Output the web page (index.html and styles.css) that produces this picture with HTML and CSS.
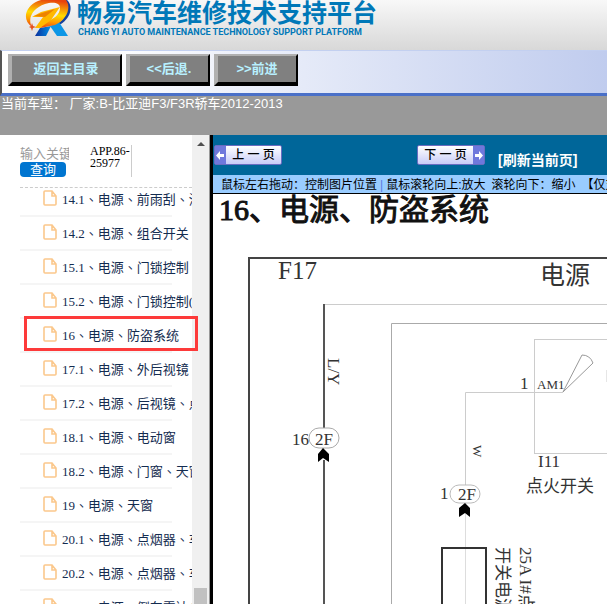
FILE: index.html
```html
<!DOCTYPE html>
<html lang="zh">
<head>
    <meta charset="UTF-8">
    <meta name="viewport" content="width=device-width, initial-scale=1.0">
    <title>畅易汽车维修技术支持平台</title>
    <link rel="stylesheet" href="styles.css">
</head>
<body>

<header class="header">
    <svg class="logo" width="48" height="40" viewBox="0 0 48 40">
        <defs>
            <linearGradient id="fire" x1="0.6" y1="0" x2="0.4" y2="1">
                <stop offset="0" stop-color="#e8420c"/>
                <stop offset="0.5" stop-color="#ffdc00"/>
                <stop offset="0.75" stop-color="#ff9c00"/>
                <stop offset="1" stop-color="#e8420c"/>
            </linearGradient>
            <linearGradient id="water" x1="0" y1="0" x2="1" y2="0">
                <stop offset="0" stop-color="#0b2f9c"/>
                <stop offset="1" stop-color="#0090e6"/>
            </linearGradient>
        </defs>
        <path d="M42 0 C48 5 47 17 36 24 L32 24 C42 18 44 8 38 0 Z" fill="#16409c"/>
        <path d="M15 28 L26 26 L21 36 L10 36 Z" fill="url(#water)"/>
        <path d="M25 26 L34 22 L43 36 L32 36 Z" fill="#0c96e6"/>
        <path d="M7 27 C-4 19 1 6 13 1 L16 0 L41 0 C47 8 41 20 30 25 L15 28 L20 21 C29 20 35 14 35 8 C35 2 27 2 20 4 C8 8 2 18 7 27 Z" fill="url(#fire)"/>
        <path d="M7 17 L16 12 L35 7 L26 20 L15 28 L10 28 L18 17 Z" fill="#ffb800"/>
        <path d="M9 16 L17 13 L30 9 L20 17 Z" fill="#ee8200"/>
        <path d="M7 23 L8 26 L11 27 L8 28 L7 31 L6 28 L4 27 L6 26 Z" fill="#e8501c"/>
    </svg>
    <div class="brand">
        <div class="brand-name">畅易汽车维修技术支持平台</div>
        <div class="brand-sub">CHANG YI AUTO MAINTENANCE TECHNOLOGY SUPPORT PLATFORM</div>
    </div>
</header>

<nav class="toolbar">
    <button class="tool-btn tool-btn-wide">返回主目录</button>
    <button class="tool-btn">&lt;&lt;后退.</button>
    <button class="tool-btn">&gt;&gt;前进</button>
</nav>

<div class="status">当前车型： 厂家:B-比亚迪F3/F3R轿车2012-2013</div>

<div class="main">
    <aside class="sidebar">
        <div class="sidebar-content">
            <div class="search">
                <form class="search-form">
                    <input class="search-input" type="text" placeholder="输入关键字" aria-label="输入关键字">
                    <button class="search-btn" type="button">查询</button>
                </form>
                <div class="app-code">APP.86-25977</div>
            </div>
            <ul class="tree">
                <li><a href="#"><svg class="file-icon"><use href="#file"/></svg>14.1、电源、前雨刮、洗涤</a></li>
                <li><a href="#"><svg class="file-icon"><use href="#file"/></svg>14.2、电源、组合开关</a></li>
                <li><a href="#"><svg class="file-icon"><use href="#file"/></svg>15.1、电源、门锁控制</a></li>
                <li><a href="#"><svg class="file-icon"><use href="#file"/></svg>15.2、电源、门锁控制(续)</a></li>
                <li class="current"><a href="#"><svg class="file-icon"><use href="#file"/></svg>16、电源、防盗系统</a></li>
                <li><a href="#"><svg class="file-icon"><use href="#file"/></svg>17.1、电源、外后视镜</a></li>
                <li><a href="#"><svg class="file-icon"><use href="#file"/></svg>17.2、电源、后视镜、点烟器</a></li>
                <li><a href="#"><svg class="file-icon"><use href="#file"/></svg>18.1、电源、电动窗</a></li>
                <li><a href="#"><svg class="file-icon"><use href="#file"/></svg>18.2、电源、门窗、天窗</a></li>
                <li><a href="#"><svg class="file-icon"><use href="#file"/></svg>19、电源、天窗</a></li>
                <li><a href="#"><svg class="file-icon"><use href="#file"/></svg>20.1、电源、点烟器、车灯</a></li>
                <li><a href="#"><svg class="file-icon"><use href="#file"/></svg>20.2、电源、点烟器、车灯</a></li>
                <li><a href="#"><svg class="file-icon"><use href="#file"/></svg>21.1、电源、倒车雷达(一)</a></li>
            </ul>
        </div>
        <div class="scrollbar">
            <div class="scroll-up"></div>
            <div class="scroll-thumb"></div>
        </div>
    </aside>

    <section class="viewer">
        <div class="pager">
            <button class="page-btn page-prev">
                <span class="page-arrow"><svg width="9" height="9" viewBox="0 0 9 9"><path d="M0 4.5 L4 0 V3 H8 V6 H4 V9 Z" fill="#fff"/></svg></span>
                <span class="page-text">上 一 页</span>
            </button>
            <button class="page-btn page-next">
                <span class="page-text">下 一 页</span>
                <span class="page-arrow"><svg width="9" height="9" viewBox="0 0 9 9"><path d="M9 4.5 L5 0 V3 H1 V6 H5 V9 Z" fill="#fff"/></svg></span>
            </button>
            <a class="refresh" href="#">[刷新当前页]</a>
        </div>
        <div class="hint">
            <span>鼠标左右拖动：控制图片位置</span>
            <span class="hint-sep">|</span>
            <span>鼠标滚轮向上:放大</span>
            <span class="hint-next">滚轮向下：缩小</span>
            <span class="hint-next">【仅支持IE浏览器】</span>
        </div>
        <div class="diagram">
            <svg width="800" height="600" viewBox="0 0 800 600">
                <text class="d-title" x="6" y="26">16、电源、防盗系统</text>

                <!-- F17 frame -->
                <path d="M800 64 H36 V600" stroke="#444" stroke-width="2" fill="none"/>
                <text class="d-big" x="65" y="85">F17</text>
                <text class="d-big" x="327" y="90">电源</text>

                <!-- L/Y wire -->
                <path d="M111 110.5 H800" stroke="#ccc"/>
                <path d="M111 110 V234 M111 266 V600" stroke="#555" stroke-width="2"/>
                <text class="d-mid" transform="translate(115 164) rotate(90)">L/Y</text>
                <text class="d-mid" x="79" y="251">16</text>
                <rect x="96" y="234" width="30" height="20" rx="10" fill="none" stroke="#aaa"/>
                <text class="d-mid" x="102" y="251">2F</text>
                <path d="M110 254 L116 260 V268 L110 264 L105 268 V260 Z" fill="#000"/>

                <!-- inner frame -->
                <path d="M800 129.5 H178.5 V600" stroke="#aaa" fill="none"/>

                <!-- ignition switch -->
                <rect x="321.5" y="145.5" width="200" height="114" fill="none" stroke="#ccc"/>
                <path d="M350 198.5 H252.5 V291" stroke="#ccc" fill="none"/>
                <path d="M350 198 L369 161 Q377 161 380 169 Z" stroke="#999" fill="none"/>
                <path d="M394 176 V188" stroke="#ccc"/>
                <text class="d-mid" x="307" y="195">1</text>
                <text class="d-small" x="324" y="195">AM1</text>
                <text class="d-mid" x="325" y="273">I11</text>
                <text class="d-mid" x="313" y="298">点火开关</text>

                <!-- W wire -->
                <text class="d-small" transform="translate(260 251) rotate(90)">W</text>
                <text class="d-mid" x="227" y="305">1</text>
                <rect x="237" y="291" width="30" height="18" rx="9" fill="none" stroke="#bbb"/>
                <text class="d-mid" x="245" y="306">2F</text>
                <path d="M252.5 309 V600" stroke="#ddd"/>
                <path d="M252 309 L257 314 V323 L252 319 L246 323 V314 Z" fill="#000"/>
                <rect x="229" y="354" width="44" height="200" fill="none" stroke="#333" stroke-width="2"/>
                <text class="d-mid" transform="translate(307 353) rotate(90)">25A I#点火</text>
                <text class="d-mid" transform="translate(284 353) rotate(90)">开关电源</text>
            </svg>
        </div>
    </section>
</div>

<svg class="symbols" width="0" height="0">
    <symbol id="file" viewBox="0 0 14 16">
        <path d="M2 1 H9 L13 6 V14 Q13 15 12 15 H2 Q1 15 1 14 V2 Q1 1 2 1 Z M9 1 V6 H13" fill="#fff" stroke="#fbc88c" stroke-width="1.6"/>
    </symbol>
</svg>

</body>
</html>
```
FILE: styles.css
```css
* {
    box-sizing: border-box;
}
body {
    margin: 0;
    height: 100vh;
    display: flex;
    flex-direction: column;
    overflow: hidden;
    font-family: "Liberation Sans", "Noto Sans CJK SC", sans-serif;
    font-size: 13px;
    background-color: #fff;
}
.symbols {
    position: absolute;
}

/* header */
.header {
    flex: none;
    height: 50px;
    display: flex;
    padding-left: 25px;
    background: linear-gradient(#f8f8f8, #d8d8d8);
    overflow: hidden;
}
.logo {
    flex: none;
}
.brand {
    padding-left: 4px;
    color: #0078b8;
    font-weight: bold;
    white-space: nowrap;
}
.brand-name {
    font-family: "Noto Sans CJK SC", sans-serif;
    font-size: 25px;
    line-height: 23px;
}
.brand-sub {
    padding-left: 1px;
    font-family: Roboto, "Liberation Sans", sans-serif;
    font-size: 9px;
    line-height: 19px;
}

/* toolbar */
.toolbar {
    flex: none;
    display: flex;
    gap: 4px;
    padding: 3px 6px 7px 6px;
    border-top: 1px solid #c3d0f0;
    border-left: 2px solid #555;
    border-bottom: 3px solid #4a70c8;
    background: linear-gradient(to right, #fff, #fff 15%, #c0ccee);
}
.tool-btn {
    width: 84px;
    height: 32px;
    padding: 0;
    border-style: solid;
    border-width: 2px 2px 4px 4px;
    border-color: #b0b0b0 #000 #000 #b0b0b0;
    background-color: #808080;
    color: #b8f0ff;
    font-family: inherit;
    font-size: 13px;
    font-weight: bold;
    line-height: 24px;
    cursor: pointer;
}
.tool-btn-wide {
    width: 114px;
}

.status {
    flex: none;
    height: 39px;
    padding-left: 1px;
    background-color: #999;
    color: #fff;
    line-height: 16px;
    white-space: nowrap;
}

.main {
    flex: 1;
    min-height: 0;
    display: flex;
}

/* sidebar */
.sidebar {
    position: relative;
    flex: none;
    width: 213px;
    display: flex;
    overflow: hidden;
    border-right: 3px solid #000;
}
.sidebar-content {
    flex: 1;
    min-width: 0;
    padding: 10px 0 0 20px;
    font-family: "Liberation Serif", "Noto Sans CJK TC", serif;
}
.search {
    display: flex;
    height: 43px;
    border-bottom: 1px dashed #ccc;
}
.search-form {
    width: 49px;
    margin-right: 21px;
}
.search-input {
    display: block;
    width: 100%;
    height: 17px;
    padding: 0;
    border: none;
    outline: none;
    background: none;
    font-family: inherit;
    font-size: 13px;
}
.search-input::placeholder {
    color: #999;
}
.search-btn {
    display: block;
    width: 46px;
    height: 15px;
    padding: 0;
    border: none;
    border-radius: 4px;
    background-color: #0075d0;
    color: #fff;
    font-family: inherit;
    font-size: 13px;
    line-height: 15px;
    cursor: pointer;
}
.app-code {
    width: 42px;
    height: 32px;
    border-right: 1px solid #ccc;
    font-size: 12px;
    line-height: 12px;
}
.tree {
    list-style: none;
    margin: -5px 20px 0 0;
    padding: 0;
    font-feature-settings: "locl" 0;
}
.tree li {
    position: relative;
    border-bottom: 2px solid #f5f5f5;
}
.tree a {
    display: flex;
    align-items: center;
    gap: 5px;
    height: 32px;
    margin-right: -20px;
    padding-bottom: 2px;
    padding-left: 23px;
    overflow: hidden;
    color: #142c50;
    text-decoration: none;
    white-space: nowrap;
}
.file-icon {
    flex: none;
    width: 14px;
    height: 16px;
}
/* highlight frame, runs over the scrollbar */
.tree .current::after {
    content: "";
    position: absolute;
    z-index: 1;
    top: -3px;
    left: 4px;
    right: -26px;
    bottom: 0;
    border: 3px solid #fd3a3a;
    pointer-events: none;
}
.scrollbar {
    flex: none;
    width: 18px;
    display: flex;
    flex-direction: column;
    justify-content: space-between;
    align-items: center;
    padding-top: 7px;
    background-color: #f0f0f0;
    border-right: 1px solid #999;
}
.scroll-up {
    border: 4px solid transparent;
    border-top: none;
    border-bottom: 4px solid #505050;
}
.scroll-thumb {
    width: 13px;
    height: 16px;
    background-color: #c1c1c1;
}

/* viewer */
.viewer {
    flex: 1;
    min-width: 0;
    display: flex;
    flex-direction: column;
    overflow: hidden;
}
.pager {
    flex: none;
    display: flex;
    align-items: center;
    height: 40px;
    padding-left: 1px;
    background-color: #069;
}
.page-btn {
    display: flex;
    width: 68px;
    height: 20px;
    padding: 0;
    border: 1px solid #6a6cc0;
    border-radius: 2px;
    background: linear-gradient(#fff, #c8ccf8);
    color: #000;
    font-family: inherit;
    font-size: 12px;
    font-weight: 500;
    line-height: 18px;
    white-space: nowrap;
    cursor: pointer;
}
.page-next {
    margin-left: 135px;
}
.page-text {
    flex: 1;
}
.page-arrow {
    display: flex;
    align-items: center;
    justify-content: center;
    width: 11px;
    height: 18px;
    background-color: #6f78dc;
}
.refresh {
    margin-left: 13px;
    padding-top: 8px;
    color: #fff;
    font-size: 14px;
    font-weight: bold;
    text-decoration: none;
    white-space: nowrap;
}
.hint {
    flex: none;
    display: flex;
    height: 19px;
    padding-left: 8px;
    border-bottom: 1px solid #000;
    background-color: #9cf;
    font-size: 12px;
    line-height: 20px;
    white-space: nowrap;
}
.hint-sep {
    padding: 0 3px;
    color: #5a7ae0;
}
.hint-next {
    padding-left: 6px;
}
.diagram {
    flex: 1;
    min-height: 0;
    overflow: hidden;
    font-family: "Liberation Serif", "Noto Sans CJK SC", serif;
}
.diagram svg {
    display: block;
}
.diagram text {
    fill: #333;
}
.diagram .d-title {
    font-size: 30px;
    fill: #111;
    stroke: #111;
    stroke-width: 1px;
}
.d-big {
    font-size: 25px;
}
.d-mid {
    font-size: 17px;
}
.d-small {
    font-size: 13px;
}
```
